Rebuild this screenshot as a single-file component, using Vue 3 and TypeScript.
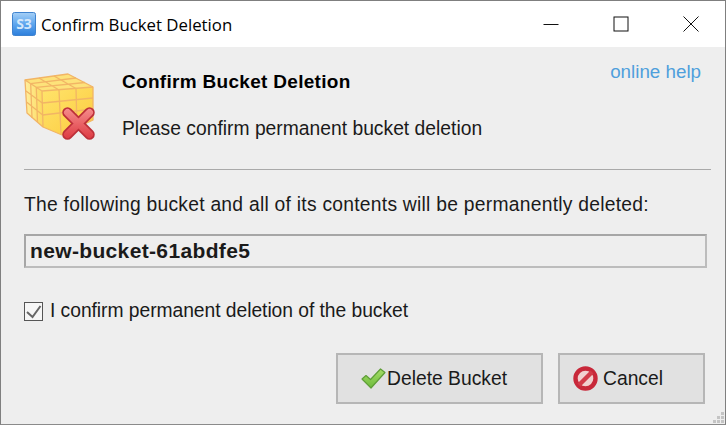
<script setup lang="ts">
const title = 'Confirm Bucket Deletion';
const bucketName = 'new-bucket-61abdfe5';
const gripDots = [
  [8, 0], [4, 4], [8, 4], [0, 8], [4, 8], [8, 8],
];
</script>

<template>
  <div class="window">
    <div class="titlebar">
      <svg class="app-icon" width="24" height="24" viewBox="0 0 24 24">
        <defs>
          <linearGradient id="s3bg" x1="0" y1="0" x2="0" y2="1">
            <stop offset="0" stop-color="#a6d0f6" />
            <stop offset="0.5" stop-color="#5fa6ee" />
            <stop offset="1" stop-color="#2d7fdc" />
          </linearGradient>
        </defs>
        <rect x="0.5" y="0.5" width="23" height="23" rx="2" fill="url(#s3bg)" stroke="#3f83cf" />
        <text x="12" y="17" text-anchor="middle" class="s3-text">S3</text>
      </svg>
      <span class="title-text">{{ title }}</span>
      <div class="controls">
        <svg width="16" height="16" viewBox="0 0 16 16"><path d="M0.5 8.5H15.5" stroke="#111" fill="none" /></svg>
        <svg width="16" height="16" viewBox="0 0 16 16"><rect x="1" y="1" width="14" height="14" stroke="#111" fill="none" /></svg>
        <svg width="16" height="16" viewBox="0 0 16 16"><path d="M0.5 0.5L15.5 15.5M15.5 0.5L0.5 15.5" stroke="#111" fill="none" /></svg>
      </div>
    </div>

    <div class="body">
      <div class="header">
        <svg class="cube" width="74" height="76" viewBox="0 0 74 76">
          <defs>
            <linearGradient id="cubeFront" x1="0" y1="0" x2="1" y2="1">
              <stop offset="0" stop-color="#ffe46c" />
              <stop offset="1" stop-color="#fccb3e" />
            </linearGradient>
            <linearGradient id="cubeSide" x1="0" y1="0" x2="1" y2="0">
              <stop offset="0" stop-color="#fff0a0" />
              <stop offset="1" stop-color="#fcd95c" />
            </linearGradient>
            <linearGradient id="crossFill" gradientUnits="userSpaceOnUse" x1="0" y1="36" x2="0" y2="66">
              <stop offset="0" stop-color="#f58a8a" />
              <stop offset="1" stop-color="#dd3a42" />
            </linearGradient>
          </defs>
          <path d="M1 7L44 1L69 14L18 18Z" fill="#fde27a" />
          <path d="M1 7L18 18L19 54L3 40Z" fill="url(#cubeSide)" />
          <path d="M18 18L69 14L69 47L38 62L19 54Z" fill="url(#cubeFront)" />
          <g fill="none" stroke="#f2b565" stroke-width="1.3" stroke-linejoin="round">
            <path d="M1 7L44 1L69 14L69 47L38 62L19 54L3 40Z" />
            <path d="M1 7L18 18L69 14M18 18L19 54" />
            <path d="M15 5L35 17M30 3L52 15.5M6.7 10.7L52 5M12.3 14.3L61 9.5" />
            <path d="M35 17L37 61M52 15.5L53 55" />
            <path d="M18.3 30L69 25M18.7 42L69 36" />
            <path d="M6.7 10.7L8 45M12.3 14.3L13.5 49M2 18L18.3 30M2.5 29L18.7 42" />
          </g>
          <path d="M43.5 39.5L65.5 61.5M65.5 39.5L43.5 61.5" fill="none" stroke="#bd3039" stroke-width="10.5" stroke-linecap="round" />
          <path d="M43.5 39.5L65.5 61.5M65.5 39.5L43.5 61.5" fill="none" stroke="url(#crossFill)" stroke-width="7" stroke-linecap="round" />
        </svg>
        <div class="heading">
          <div class="heading-title">{{ title }}</div>
          <div class="heading-sub">Please confirm permanent bucket deletion</div>
        </div>
        <a class="help">online help</a>
      </div>

      <div class="divider"></div>

      <div class="label">The following bucket and all of its contents will be permanently deleted:</div>
      <div class="field">{{ bucketName }}</div>

      <label class="confirm">
        <span class="checkbox">
          <svg width="17" height="17" viewBox="0 0 17 17">
            <path d="M2 9L7.5 14L15.5 3" fill="none" stroke="#666" stroke-width="2" />
          </svg>
        </span>
        <span class="confirm-text">I confirm permanent deletion of the bucket</span>
      </label>

      <div class="actions">
        <button class="btn btn-delete">
          <svg width="25" height="21" viewBox="0 0 25 21">
            <defs>
              <linearGradient id="okFill" x1="0" y1="0" x2="0" y2="1">
                <stop offset="0" stop-color="#a6dd68" />
                <stop offset="1" stop-color="#6dbb3c" />
              </linearGradient>
            </defs>
            <path
              d="M1 11L5 7.5L9.5 11.5L19.5 1L24 4.5L10 20Z"
              fill="url(#okFill)"
              stroke="#5f9e38"
              stroke-width="1.2"
              stroke-linejoin="round"
            />
          </svg>
          <span>Delete Bucket</span>
        </button>
        <button class="btn btn-cancel">
          <svg width="25" height="25" viewBox="0 0 25 25">
            <circle cx="12.5" cy="12.5" r="10" fill="#f1cfcf" stroke="#c8283a" stroke-width="4.4" />
            <path d="M6 19L19 6" stroke="#d23a48" stroke-width="4.4" />
          </svg>
          <span>Cancel</span>
        </button>
      </div>
    </div>

    <div class="grip">
      <i v-for="(dot, i) in gripDots" :key="i" :style="{ left: dot[0] + 'px', top: dot[1] + 'px' }"></i>
    </div>
  </div>
</template>

<style scoped>
.window {
  position: relative;
  box-sizing: border-box;
  width: 726px;
  height: 425px;
  border: 1px solid #7f7f7f;
  border-bottom-color: #8a8a8a;
  background: #eeeeee;
  font-family: "Liberation Sans", Arial, sans-serif;
  font-size: 19.3px;
  color: #1a1a1a;
  overflow: hidden;
}

.titlebar {
  display: flex;
  align-items: center;
  height: 46px;
  padding-left: 11px;
  background: #ffffff;
}

.app-icon {
  flex: none;
}

.s3-text {
  font-family: "Open Sans", sans-serif;
  font-size: 14px;
  font-weight: 700;
  fill: #d5e8fb;
}

.title-text {
  margin-left: 5px;
  font-family: "Open Sans", sans-serif;
  font-size: 16.8px;
  color: #000000;
}

.controls {
  display: flex;
  gap: 54px;
  margin-left: auto;
  margin-right: 26px;
}

.body {
  padding: 0 18px 0 23px;
}

.header {
  display: flex;
  align-items: flex-start;
  height: 122px;
}

.cube {
  flex: none;
  margin-top: 26px;
}

.heading {
  margin-left: 24px;
  margin-top: 24px;
}

.heading-title {
  font-weight: 700;
  font-size: 19px;
  letter-spacing: 0.3px;
  line-height: 22px;
  color: #000000;
}

.heading-sub {
  margin-top: 25px;
  line-height: 22px;
}

.help {
  margin-left: auto;
  margin-top: 14px;
  margin-right: 6px;
  font-size: 18.8px;
  line-height: 22px;
  color: #4f9fdc;
}

.divider {
  height: 1px;
  margin-right: -4px;
  background: #a9a9a9;
}

.label {
  margin-top: 24px;
  line-height: 22px;
  letter-spacing: 0.25px;
}

.field {
  box-sizing: border-box;
  height: 34px;
  margin-top: 18px;
  padding-left: 4px;
  border: 2px solid #bcbcbc;
  border-top-color: #a6a6a6;
  border-left-color: #a6a6a6;
  background: #eeeeee;
  font-weight: 700;
  font-size: 21px;
  letter-spacing: 0.35px;
  line-height: 30px;
  color: #1a1a1a;
}

.confirm {
  display: flex;
  align-items: center;
  gap: 7px;
  margin-top: 32px;
  line-height: 22px;
}

.confirm-text {
  letter-spacing: -0.05px;
}

.checkbox {
  box-sizing: border-box;
  display: block;
  flex: none;
  width: 19px;
  height: 19px;
  border: 1px solid #555555;
  background: #f6f6f6;
}

.checkbox svg {
  display: block;
}

.actions {
  display: flex;
  justify-content: flex-end;
  gap: 15px;
  margin-top: 31px;
  margin-right: 2px;
}

.btn {
  display: flex;
  align-items: center;
  justify-content: flex-start;
  box-sizing: border-box;
  height: 51px;
  padding: 0;
  border: 2px solid #b6b6b6;
  border-radius: 0;
  background: #e1e1e1;
  font-family: inherit;
  font-size: 19.3px;
  color: #1a1a1a;
}

.btn-delete {
  width: 207px;
  padding-left: 23px;
  gap: 1px;
}

.btn-cancel {
  width: 147px;
  padding-left: 13px;
  gap: 5px;
}

.grip {
  position: absolute;
  right: 1px;
  bottom: 1px;
  width: 11px;
  height: 11px;
}

.grip i {
  position: absolute;
  width: 3px;
  height: 3px;
  background: #c4c4c4;
}
</style>
